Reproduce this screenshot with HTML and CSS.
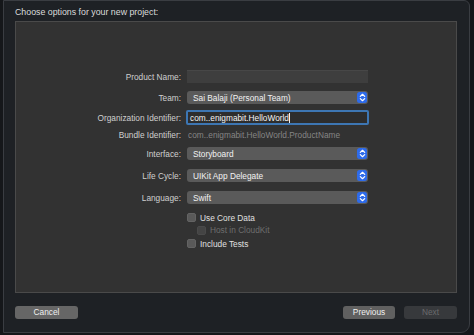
FILE: index.html
```html
<!DOCTYPE html>
<html>
<head>
<meta charset="utf-8">
<link rel="stylesheet" href="styles.css">
</head>
<body>
<div class="window">
  <div class="title">Choose options for your new project:</div>
  <div class="panel">
    <div class="form">
      <div class="row r-name">
        <div class="label">Product Name:</div>
        <div class="field text-field"></div>
      </div>
      <div class="row r-team">
        <div class="label">Team:</div>
        <div class="field popup"><span class="popup-text">Sai Balaji (Personal Team)</span><span class="stepper"><svg width="7" height="9" viewBox="0 0 7 9"><path d="M1.3 3.4 L3.5 1.3 L5.7 3.4 M1.3 5.6 L3.5 7.7 L5.7 5.6" fill="none" stroke="#fff" stroke-width="1.2" stroke-linecap="round" stroke-linejoin="round"/></svg></span></div>
      </div>
      <div class="row r-org">
        <div class="label">Organization Identifier:</div>
        <div class="field focus-field"><span class="focus-text">com..enigmabit.HelloWorld</span><span class="caret"></span></div>
      </div>
      <div class="row r-bundle">
        <div class="label">Bundle Identifier:</div>
        <div class="field bundle">com..enigmabit.HelloWorld.ProductName</div>
      </div>
      <div class="row r-iface">
        <div class="label">Interface:</div>
        <div class="field popup"><span class="popup-text">Storyboard</span><span class="stepper"><svg width="7" height="9" viewBox="0 0 7 9"><path d="M1.3 3.4 L3.5 1.3 L5.7 3.4 M1.3 5.6 L3.5 7.7 L5.7 5.6" fill="none" stroke="#fff" stroke-width="1.2" stroke-linecap="round" stroke-linejoin="round"/></svg></span></div>
      </div>
      <div class="row r-life">
        <div class="label">Life Cycle:</div>
        <div class="field popup"><span class="popup-text">UIKit App Delegate</span><span class="stepper"><svg width="7" height="9" viewBox="0 0 7 9"><path d="M1.3 3.4 L3.5 1.3 L5.7 3.4 M1.3 5.6 L3.5 7.7 L5.7 5.6" fill="none" stroke="#fff" stroke-width="1.2" stroke-linecap="round" stroke-linejoin="round"/></svg></span></div>
      </div>
      <div class="row r-lang">
        <div class="label">Language:</div>
        <div class="field popup"><span class="popup-text">Swift</span><span class="stepper"><svg width="7" height="9" viewBox="0 0 7 9"><path d="M1.3 3.4 L3.5 1.3 L5.7 3.4 M1.3 5.6 L3.5 7.7 L5.7 5.6" fill="none" stroke="#fff" stroke-width="1.2" stroke-linecap="round" stroke-linejoin="round"/></svg></span></div>
      </div>
      <div class="row r-cb1">
        <div class="label"></div>
        <div class="check"><span class="box"></span><span class="check-text">Use Core Data</span></div>
      </div>
      <div class="row r-cb2">
        <div class="label"></div>
        <div class="check indent disabled"><span class="box"></span><span class="check-text">Host in CloudKit</span></div>
      </div>
      <div class="row r-cb3">
        <div class="label"></div>
        <div class="check"><span class="box"></span><span class="check-text">Include Tests</span></div>
      </div>
    </div>
  </div>
  <div class="buttons">
    <div class="btn cancel">Cancel</div>
    <div class="spacer"></div>
    <div class="btn previous">Previous</div>
    <div class="btn next">Next</div>
  </div>
</div>
</body>
</html>
```
FILE: styles.css
```css
html, body {
  margin: 0;
  padding: 0;
}
body {
  width: 474px;
  height: 335px;
  overflow: hidden;
  background: #15171a;
  font-family: "Liberation Sans", Arial, sans-serif;
  color: #d6d6d6;
}
.window {
  box-sizing: border-box;
  margin-left: 3px;
  width: 467px;
  height: 333px;
  background: #1e2125;
  border: 1px solid #3a3d42;
  border-radius: 0 6px 9px 0;
  display: flex;
  flex-direction: column;
}
.title {
  height: 20px;
  padding-left: 11px;
  font-size: 8.8px;
  line-height: 22px;
  color: #dcdcdc;
}
.panel {
  box-sizing: border-box;
  margin-left: 11px;
  width: 442px;
  height: 272px;
  background: #323232;
  border: 1px solid #4a4a4a;
}
.form {
  display: flex;
  flex-direction: column;
  padding-top: 48px;
}
.row {
  display: flex;
  align-items: center;
  gap: 6px;
  font-size: 8.3px;
}
.label {
  width: 165px;
  text-align: right;
  color: #cfcfcf;
}
.field {
  box-sizing: border-box;
  width: 181px;
}
.r-name { height: 13px; }
.r-team { height: 13px; margin-top: 8px; }
.r-org { height: 15px; margin-top: 6px; }
.r-bundle { height: 12px; margin-top: 4px; }
.r-iface { height: 13px; margin-top: 6px; }
.r-life { height: 13px; margin-top: 9px; }
.r-lang { height: 13px; margin-top: 9px; }
.r-cb1 { height: 11px; margin-top: 8px; }
.r-cb2 { height: 10px; margin-top: 2px; }
.r-cb3 { height: 11px; margin-top: 3px; }

.text-field {
  height: 13px;
  background: #3e3e3e;
  border-top: 1px solid #474747;
}
.popup {
  height: 13px;
  background: #5a5a5a;
  border-radius: 3px;
  display: flex;
  align-items: center;
  justify-content: space-between;
  padding-left: 6px;
  padding-right: 1px;
}
.popup-text {
  color: #f2f2f2;
}
.stepper {
  width: 10px;
  height: 11px;
  border-radius: 2.5px;
  background: #2e6bea;
  display: flex;
  align-items: center;
  justify-content: center;
}
.focus-field {
  height: 15px;
  width: 183px;
  margin-left: -1px;
  border: 2px solid #3d76b3;
  border-radius: 2px;
  background: #2d2d2d;
  display: flex;
  align-items: center;
  padding-left: 2px;
  color: #f4f4f4;
}
.caret {
  width: 1px;
  height: 10px;
  background: #f0f0f0;
}
.bundle {
  color: #858585;
  padding-left: 1px;
}
.check {
  display: flex;
  align-items: center;
  gap: 4px;
  color: #e0e0e0;
}
.check.indent {
  margin-left: 10px;
}
.box {
  box-sizing: border-box;
  width: 9px;
  height: 9px;
  border-radius: 2px;
  background: #595959;
  border: 1px solid #636363;
}
.check.disabled .box {
  background: #444;
  border-color: #4a4a4a;
}
.check.disabled .check-text {
  color: #6e6e6e;
}
.buttons {
  display: flex;
  align-items: center;
  margin-top: 13px;
  padding-left: 11px;
  padding-right: 12px;
  gap: 9px;
}
.spacer {
  flex: 1;
}
.btn {
  height: 13px;
  border-radius: 3px;
  font-size: 8.3px;
  line-height: 13px;
  text-align: center;
  color: #f0f0f0;
}
.cancel {
  width: 63px;
  background: #666666;
}
.previous {
  width: 52px;
  background: #606060;
}
.next {
  width: 53px;
  background: #37393c;
  color: #6a6b6d;
}
```
